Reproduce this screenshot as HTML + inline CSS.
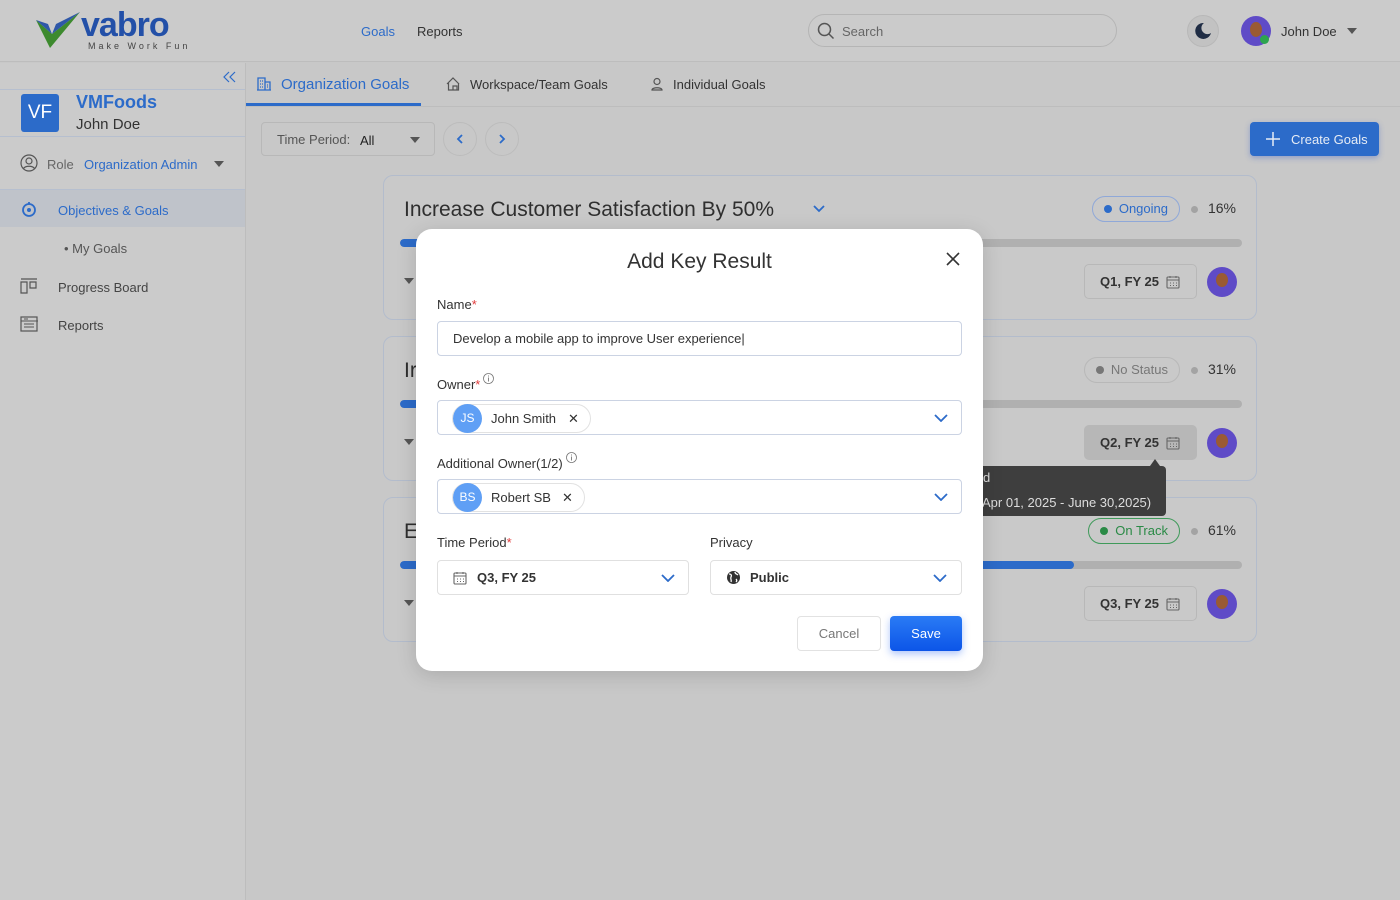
<!DOCTYPE html>
<html><head><meta charset="utf-8"><style>
*{box-sizing:border-box;margin:0;padding:0}
body{width:1400px;height:900px;overflow:hidden;background:#c8c8c8;font-family:"Liberation Sans",sans-serif;color:#333;position:relative}
.abs{position:absolute}
.hdr{left:0;top:0;width:1400px;height:62px;background:#cbcbcb;border-bottom:1px solid #bdbdbd}
.side{left:0;top:63px;width:246px;height:837px;background:#cbcbcb;border-right:1px solid #bdbdbd}
.blue{color:#2c6bc9}
.card{position:absolute;left:383px;width:874px;height:145px;border:1px solid #b3bccc;border-radius:10px;background:#c9c9c9}
.card .t{position:absolute;left:20px;top:22px;font-size:21px;color:#2f2f2f}
.track{position:absolute;left:16px;top:63px;width:842px;height:8px;border-radius:4px;background:#b0b0b0;overflow:hidden}
.fill{height:8px;background:#2c6bc9;border-radius:4px}
.pill{position:absolute;top:20px;height:26px;border-radius:13px;font-size:13px;line-height:24px;padding:0 11px 0 26px}
.pill:before{content:"";position:absolute;left:11px;top:8px;width:8px;height:8px;border-radius:50%;background:currentColor}
.pct{position:absolute;right:20px;top:24px;font-size:14px;color:#333}
.dot{position:absolute;right:58px;top:30px;width:7px;height:7px;border-radius:50%;background:#a3a3a3}
.qb{position:absolute;right:59px;top:88px;width:113px;height:35px;border:1px solid #b8b8b8;border-radius:5px;font-size:13px;font-weight:bold;color:#333;line-height:33px;padding-left:15px}
.qb svg{position:absolute;right:16px;top:10px}
.av{position:absolute;right:19px;top:91px;width:30px;height:30px;border-radius:50%;background:#5f4bc7;overflow:hidden}
.av:after{content:"";position:absolute;left:9px;top:6px;width:12px;height:14px;border-radius:50%;background:#9a5a34}
.car{position:absolute;left:20px;top:102px;width:0;height:0;border-left:5px solid transparent;border-right:5px solid transparent;border-top:6px solid #555}
.modal{left:416px;top:229px;width:567px;height:442px;background:#fff;border-radius:16px;box-shadow:0 4px 20px rgba(0,0,0,.15)}
.lbl{position:absolute;font-size:13px;color:#333}
.req{color:#e03a3a}
.inp{position:absolute;border:1px solid #cbd3e3;border-radius:4px;background:#fff}
.chev{position:absolute;width:14px;height:8px}
.chip{position:absolute;left:14px;top:3px;height:29px;border:1px solid #e2e2e2;border-radius:15px;font-size:13px;line-height:27px;color:#333}
.ini{position:absolute;left:0;top:0;width:29px;height:29px;border-radius:50%;background:#5f9ff5;color:#fff;font-size:12px;text-align:center;line-height:29px;margin-top:-1px}
</style></head><body>

<div class="abs hdr"></div>
<svg class="abs" style="left:34px;top:10px" width="48" height="42" viewBox="0 0 48 42"><path d="M2 10 L16 38 L46 2 L18 24 Z" fill="#3d8a2e"/><path d="M2 10 L18 24 L14 14 Z" fill="#2f58a8"/><path d="M18 24 L46 2 L22 14 Z" fill="#2f58a8"/></svg>
<div class="abs" style="left:81px;top:6px;font-size:34px;font-weight:bold;color:#2350a8;letter-spacing:-1px">vabro</div>
<div class="abs" style="left:88px;top:41px;font-size:9px;letter-spacing:3px;color:#444">Make Work Fun</div>
<div class="abs blue" style="left:361px;top:24px;font-size:13px">Goals</div>
<div class="abs" style="left:417px;top:24px;font-size:13px;color:#333">Reports</div>
<div class="abs" style="left:808px;top:14px;width:309px;height:33px;border:1px solid #b5b5b5;border-radius:17px"></div>
<svg class="abs" style="left:817px;top:22px" width="18" height="18" viewBox="0 0 18 18"><circle cx="7.5" cy="7.5" r="6" fill="none" stroke="#555" stroke-width="1.5"/><path d="M12 12l4.5 4.5" stroke="#555" stroke-width="1.5"/></svg>
<div class="abs" style="left:842px;top:24px;font-size:13px;color:#666">Search</div>
<div class="abs" style="left:1187px;top:15px;width:32px;height:32px;border-radius:50%;background:#c2c2c2;border:1px solid #b8b8b8"></div>
<svg class="abs" style="left:1194px;top:22px" width="18" height="18" viewBox="0 0 18 18"><path d="M10 1a8 8 0 1 0 7 10a6 6 0 0 1-7-10z" fill="#1f2c44"/></svg>
<div class="abs" style="left:1241px;top:16px;width:30px;height:30px;border-radius:50%;background:#5f4bc7"></div>
<div class="abs" style="left:1250px;top:22px;width:12px;height:15px;border-radius:50%;background:#9a5a34"></div>
<div class="abs" style="left:1260px;top:35px;width:9px;height:9px;border-radius:50%;background:#2da44e"></div>
<div class="abs" style="left:1281px;top:24px;font-size:13px;color:#333">John Doe</div>
<div class="abs" style="left:1347px;top:28px;border-left:5px solid transparent;border-right:5px solid transparent;border-top:6px solid #555"></div>

<div class="abs side"></div>
<svg class="abs" style="left:223px;top:71px" width="13" height="12" viewBox="0 0 13 12"><path d="M6 1L1 6l5 5M12 1L7 6l5 5" fill="none" stroke="#2c6bc9" stroke-width="1.2"/></svg>
<div class="abs" style="left:0;top:89px;width:245px;border-top:1px solid #b6bfcf"></div>
<div class="abs" style="left:21px;top:94px;width:38px;height:38px;border-radius:3px;background:#2c6bc9;color:#fff;font-size:19px;text-align:center;line-height:38px">VF</div>
<div class="abs blue" style="left:76px;top:92px;font-size:18px;font-weight:bold">VMFoods</div>
<div class="abs" style="left:76px;top:116px;font-size:15px;color:#333">John Doe</div>
<div class="abs" style="left:0;top:136px;width:245px;border-top:1px solid #b6bfcf"></div>
<svg class="abs" style="left:20px;top:154px" width="18" height="18" viewBox="0 0 18 18"><circle cx="9" cy="9" r="8" fill="none" stroke="#555" stroke-width="1.2"/><circle cx="9" cy="7" r="3" fill="none" stroke="#555" stroke-width="1.2"/><path d="M3.5 14.5c2-3 9-3 11 0" fill="none" stroke="#555" stroke-width="1.2"/></svg>
<div class="abs" style="left:47px;top:157px;font-size:13px;color:#666">Role</div>
<div class="abs blue" style="left:84px;top:157px;font-size:13px">Organization Admin</div>
<div class="abs" style="left:214px;top:161px;border-left:5px solid transparent;border-right:5px solid transparent;border-top:6px solid #555"></div>
<div class="abs" style="left:0;top:189px;width:245px;height:38px;background:#bfc3ca;border-top:1px solid #b6bfcf"></div>
<svg class="abs" style="left:21px;top:201px" width="16" height="16" viewBox="0 0 16 16"><circle cx="8" cy="9" r="6" fill="none" stroke="#2c6bc9" stroke-width="1.8"/><circle cx="8" cy="9" r="2" fill="#2c6bc9"/><path d="M8 3V1" stroke="#2c6bc9" stroke-width="1.8"/></svg>
<div class="abs blue" style="left:58px;top:203px;font-size:13px">Objectives &amp; Goals</div>
<div class="abs" style="left:64px;top:241px;font-size:13px;color:#555">• My Goals</div>
<svg class="abs" style="left:20px;top:278px" width="18" height="16" viewBox="0 0 18 16"><path d="M1 1h16M1 4h6v11H1zM10 4h6v6h-6z" fill="none" stroke="#555" stroke-width="1.2"/></svg>
<div class="abs" style="left:58px;top:280px;font-size:13px;color:#444">Progress Board</div>
<svg class="abs" style="left:20px;top:316px" width="18" height="16" viewBox="0 0 18 16"><rect x="1" y="1" width="16" height="14" fill="none" stroke="#555" stroke-width="1.2"/><path d="M1 5h17M4 3h4M4 8h10M4 11h10" stroke="#555" stroke-width="1"/></svg>
<div class="abs" style="left:58px;top:318px;font-size:13px;color:#444">Reports</div>

<div class="abs" style="left:246px;top:106px;width:1154px;border-top:1px solid #bdbdbd"></div>
<div class="abs" style="left:246px;top:103px;width:175px;height:3px;background:#2c6bc9"></div>
<svg class="abs" style="left:257px;top:77px" width="14" height="14" viewBox="0 0 14 14"><path d="M1 13V1h7v12M8 5h5v8M3 4h1M5 4h1M3 7h1M5 7h1M3 10h1M5 10h1M10 8h1M10 10h1M0 13h14" fill="none" stroke="#2c6bc9" stroke-width="1.3"/></svg>
<div class="abs blue" style="left:281px;top:76px;font-size:15px">Organization Goals</div>
<svg class="abs" style="left:446px;top:77px" width="15" height="14" viewBox="0 0 15 14"><path d="M1 7L7 1l6 6M2.5 6v7h10V6M7 13V9h4v4" fill="none" stroke="#555" stroke-width="1.2"/></svg>
<div class="abs" style="left:470px;top:77px;font-size:13px;color:#333">Workspace/Team Goals</div>
<svg class="abs" style="left:650px;top:77px" width="14" height="14" viewBox="0 0 14 14"><circle cx="7" cy="4.5" r="3" fill="none" stroke="#555" stroke-width="1.2"/><path d="M2 13c0-3 10-3 10 0z" fill="none" stroke="#555" stroke-width="1.2"/></svg>
<div class="abs" style="left:673px;top:77px;font-size:13px;color:#333">Individual Goals</div>

<div class="abs" style="left:261px;top:122px;width:174px;height:34px;border:1px solid #b8b8b8;border-radius:4px"></div>
<div class="abs" style="left:277px;top:132px;font-size:13px;color:#555">Time Period:</div>
<div class="abs" style="left:360px;top:133px;font-size:13px;color:#222">All</div>
<div class="abs" style="left:410px;top:137px;border-left:5px solid transparent;border-right:5px solid transparent;border-top:6px solid #555"></div>
<div class="abs" style="left:443px;top:122px;width:34px;height:34px;border-radius:50%;border:1px solid #bcbcbc"></div>
<div class="abs" style="left:485px;top:122px;width:34px;height:34px;border-radius:50%;border:1px solid #bcbcbc"></div>
<svg class="abs" style="left:454px;top:133px" width="12" height="12" viewBox="0 0 12 12"><path d="M8 2L4 6l4 4" fill="none" stroke="#2c6bc9" stroke-width="1.8"/></svg>
<svg class="abs" style="left:496px;top:133px" width="12" height="12" viewBox="0 0 12 12"><path d="M4 2l4 4-4 4" fill="none" stroke="#2c6bc9" stroke-width="1.8"/></svg>
<div class="abs" style="left:1250px;top:122px;width:129px;height:34px;border-radius:4px;background:#2c6bc9;box-shadow:0 2px 6px rgba(40,80,200,.35)"></div>
<svg class="abs" style="left:1266px;top:132px" width="14" height="14" viewBox="0 0 14 14"><path d="M7 0v14M0 7h14" stroke="#e6ecf5" stroke-width="1.5"/></svg>
<div class="abs" style="left:1291px;top:132px;font-size:13px;color:#e6ecf5">Create Goals</div>

<svg width="0" height="0" style="position:absolute"><defs><g id="cal"><rect x="1" y="2" width="12" height="11" rx="1" fill="none" stroke="#666" stroke-width="1.1"/><path d="M1 5h12M4 1v2M10 1v2M4 8h1M7 8h1M10 8h1M4 10.5h1M7 10.5h1M10 10.5h1" stroke="#666" stroke-width="1"/></g></defs></svg>

<div class="card" style="top:175px">
  <div class="t">Increase Customer Satisfaction By 50%</div>
  <svg class="abs" style="left:429px;top:29px" width="12" height="8" viewBox="0 0 12 8"><path d="M1 1l5 5 5-5" fill="none" stroke="#2c6bc9" stroke-width="1.8"/></svg>
  <div class="pill" style="right:76px;border:1px solid #8fa8d8;color:#2c6bc9">Ongoing</div>
  <div class="dot"></div><div class="pct">16%</div>
  <div class="track"><div class="fill" style="width:4%"></div></div>
  <div class="car"></div>
  <div class="qb">Q1, FY 25<svg width="14" height="14" viewBox="0 0 14 14"><use href="#cal"/></svg></div><div class="av"></div>
</div>
<div class="card" style="top:336px">
  <div class="t">Ir</div>
  <div class="pill" style="right:76px;border:1px solid #b8b8b8;color:#777">No Status</div>
  <div class="dot"></div><div class="pct">31%</div>
  <div class="track"><div class="fill" style="width:4%"></div></div>
  <div class="car"></div>
  <div class="qb" style="background:#b7b7b7;border-color:#b7b7b7">Q2, FY 25<svg width="14" height="14" viewBox="0 0 14 14"><use href="#cal"/></svg></div><div class="av"></div>
</div>
<div class="card" style="top:497px">
  <div class="t">E</div>
  <div class="pill" style="right:76px;border:1px solid #3f9a5a;color:#2a8a46">On Track</div>
  <div class="dot"></div><div class="pct">61%</div>
  <div class="track"><div class="fill" style="width:80%"></div></div>
  <div class="car"></div>
  <div class="qb">Q3, FY 25<svg width="14" height="14" viewBox="0 0 14 14"><use href="#cal"/></svg></div><div class="av"></div>
</div>

<div class="abs" style="left:960px;top:466px;width:206px;height:50px;background:#3e3e3e;border-radius:4px"></div>
<div class="abs" style="left:1150px;top:459px;border-left:5px solid transparent;border-right:5px solid transparent;border-bottom:7px solid #3e3e3e"></div>
<div class="abs" style="left:983px;top:470px;font-size:13px;color:#ddd">d</div>
<div class="abs" style="left:982px;top:495px;font-size:13px;color:#ddd">Apr 01, 2025 - June 30,2025)</div>

<div class="abs modal">
  <div class="abs" style="left:0;width:567px;top:21px;text-align:center;font-size:21px;color:#333">Add Key Result</div>
  <svg class="abs" style="left:529px;top:22px" width="16" height="16" viewBox="0 0 16 16"><path d="M2 2l12 12M14 2L2 14" stroke="#333" stroke-width="1.6"/></svg>
  <div class="lbl" style="left:21px;top:68px">Name<span class="req">*</span></div>
  <div class="inp" style="left:21px;top:92px;width:525px;height:35px"><div class="abs" style="left:15px;top:9px;font-size:13px;color:#333">Develop a mobile app to improve User experience|</div></div>
  <div class="lbl" style="left:21px;top:148px">Owner<span class="req">*</span></div>
  <svg class="abs" style="left:67px;top:144px" width="11" height="11" viewBox="0 0 11 11"><circle cx="5.5" cy="5.5" r="5" fill="none" stroke="#777" stroke-width=".8"/><path d="M5.5 4.5v4M5.5 2.5v1" stroke="#777" stroke-width=".9"/></svg>
  <div class="inp" style="left:21px;top:171px;width:525px;height:35px">
    <div class="chip" style="width:139px"><div class="ini">JS</div><span style="position:absolute;left:38px">John Smith</span><span style="position:absolute;left:115px">✕</span></div>
    <svg class="chev" style="left:496px;top:13px" viewBox="0 0 14 8"><path d="M1 1l6 6 6-6" fill="none" stroke="#2c6bc9" stroke-width="1.8"/></svg>
  </div>
  <div class="lbl" style="left:21px;top:227px">Additional Owner(1/2)</div>
  <svg class="abs" style="left:150px;top:223px" width="11" height="11" viewBox="0 0 11 11"><circle cx="5.5" cy="5.5" r="5" fill="none" stroke="#777" stroke-width=".8"/><path d="M5.5 4.5v4M5.5 2.5v1" stroke="#777" stroke-width=".9"/></svg>
  <div class="inp" style="left:21px;top:250px;width:525px;height:35px">
    <div class="chip" style="width:133px"><div class="ini">BS</div><span style="position:absolute;left:38px">Robert SB</span><span style="position:absolute;left:109px">✕</span></div>
    <svg class="chev" style="left:496px;top:13px" viewBox="0 0 14 8"><path d="M1 1l6 6 6-6" fill="none" stroke="#2c6bc9" stroke-width="1.8"/></svg>
  </div>
  <div class="lbl" style="left:21px;top:306px">Time Period<span class="req">*</span></div>
  <div class="lbl" style="left:294px;top:306px">Privacy</div>
  <div class="inp" style="left:21px;top:331px;width:252px;height:35px;border-color:#e0e0e0">
    <svg class="abs" style="left:15px;top:10px" width="14" height="14" viewBox="0 0 14 14"><use href="#cal"/></svg>
    <div class="abs" style="left:39px;top:9px;font-size:13px;font-weight:bold;color:#333">Q3, FY 25</div>
    <svg class="chev" style="left:223px;top:13px" viewBox="0 0 14 8"><path d="M1 1l6 6 6-6" fill="none" stroke="#2c6bc9" stroke-width="1.8"/></svg>
  </div>
  <div class="inp" style="left:294px;top:331px;width:252px;height:35px;border-color:#e0e0e0">
    <svg class="abs" style="left:15px;top:9px" width="15" height="15" viewBox="0 0 15 15"><circle cx="7.5" cy="7.5" r="6.5" fill="#333"/><path d="M3 4c2 0 3 1 2 3s1 3 0 5M9 2c0 2 2 2 3 3M10 9c1 1 1 2 0 3" fill="none" stroke="#fff" stroke-width="1.3"/></svg>
    <div class="abs" style="left:39px;top:9px;font-size:13px;font-weight:bold;color:#333">Public</div>
    <svg class="chev" style="left:222px;top:13px" viewBox="0 0 14 8"><path d="M1 1l6 6 6-6" fill="none" stroke="#2c6bc9" stroke-width="1.8"/></svg>
  </div>
  <div class="abs" style="left:381px;top:387px;width:84px;height:35px;border:1px solid #e2e2e2;border-radius:4px;text-align:center;line-height:33px;font-size:13px;color:#777">Cancel</div>
  <div class="abs" style="left:474px;top:387px;width:72px;height:35px;border-radius:4px;background:linear-gradient(#2a7bf5,#0c55e8);text-align:center;line-height:35px;font-size:13px;color:#fff;box-shadow:0 3px 8px rgba(20,90,240,.35)">Save</div>
</div>
</body></html>
